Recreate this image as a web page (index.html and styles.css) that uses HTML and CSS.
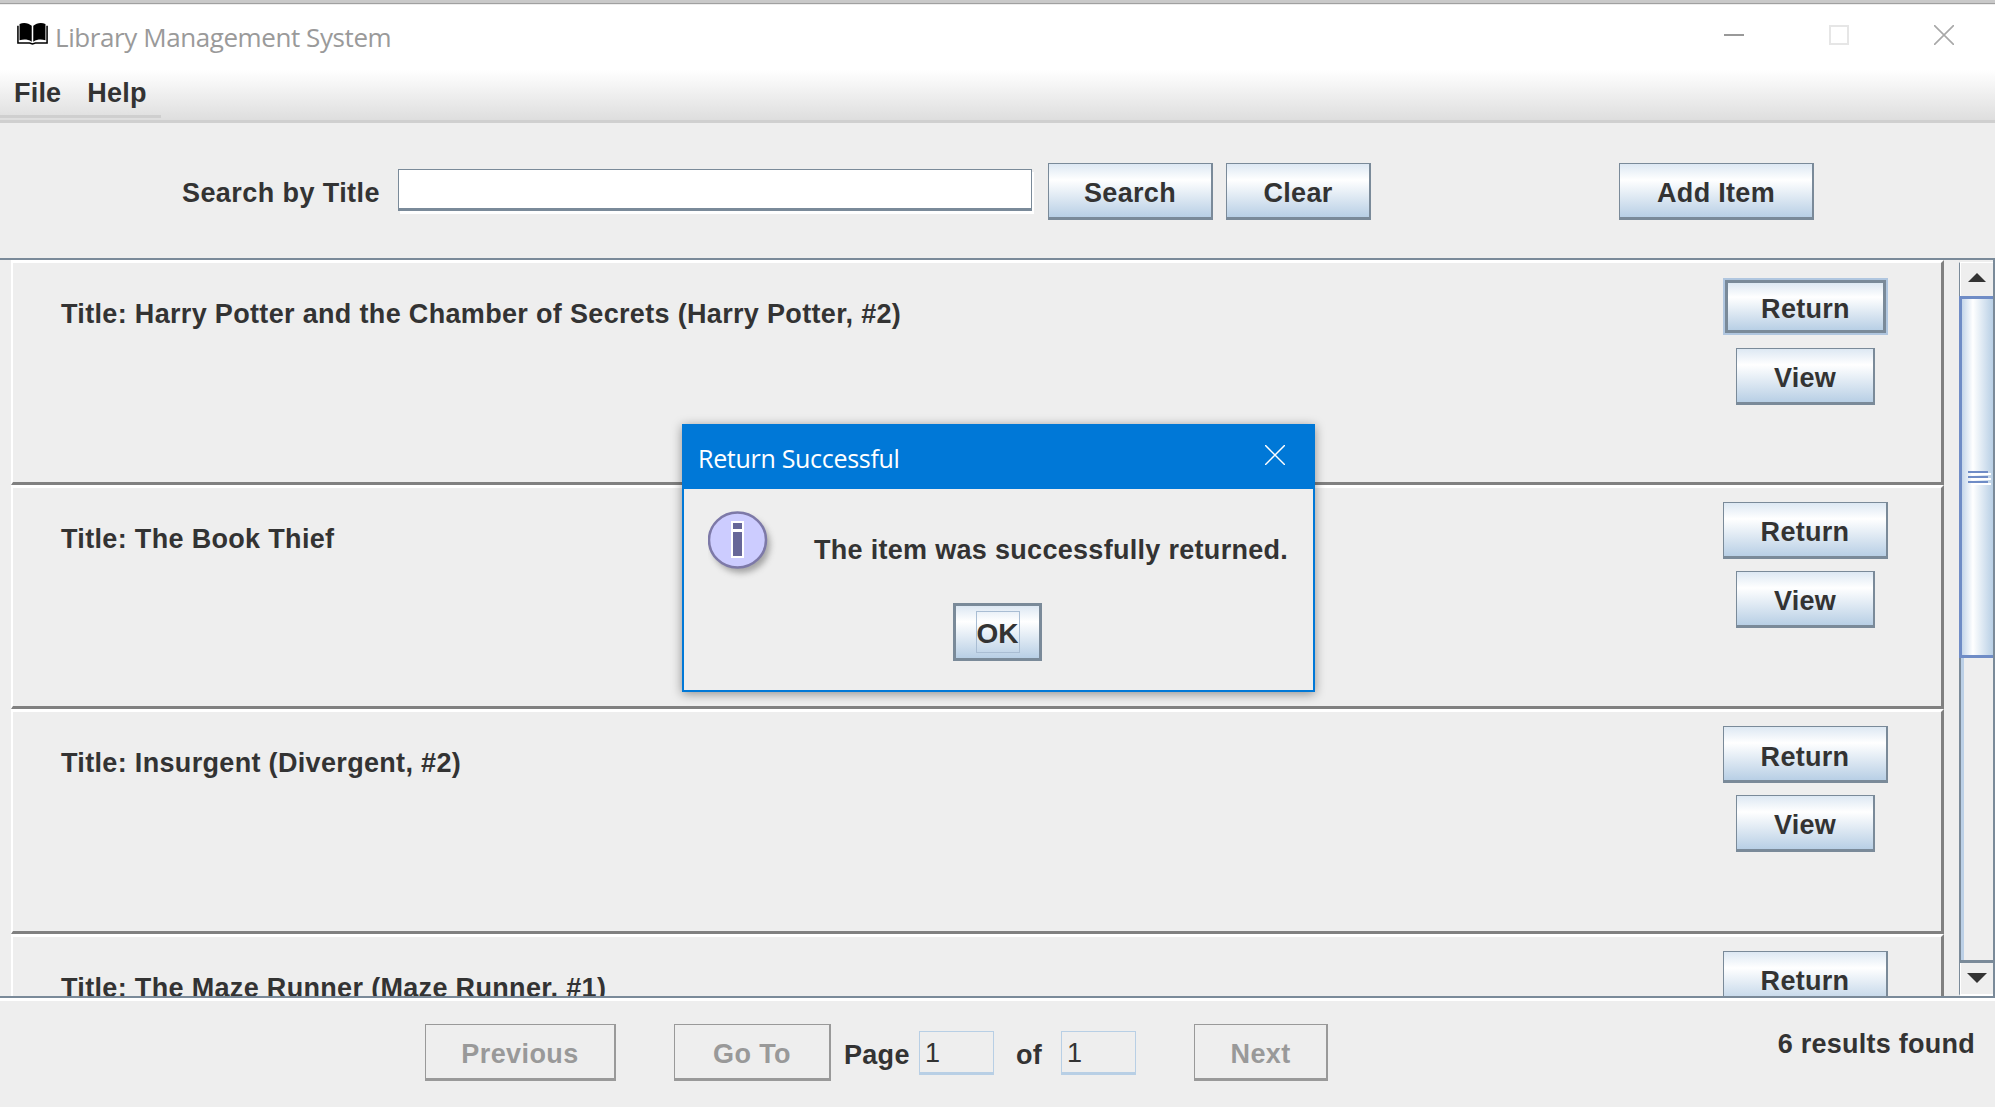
FILE: index.html
```html
<!DOCTYPE html>
<html lang="en">
<head>
  <meta charset="UTF-8">
  <title>Library Management System</title>
  <link rel="stylesheet" href="styles.css">
</head>
<body>
  <div class="window">
    <div class="titlebar">
      <svg class="book" viewBox="0 0 32 24" width="31" height="23">
        <path fill="#000" d="M2.5 2 C7 0 12 1 15.2 4 V20.5 C11 18 7 18 2.5 19 Z M16.8 4 C20 1 25 0 29.5 2 V19 C25 18 21 18 16.8 20.5 Z"/>
        <path fill="none" stroke="#000" stroke-width="1.6" d="M0.8 4 V22 H13 L16 23 L19 22 H31.2 V4"/>
      </svg>
      <span class="app-title">Library Management System</span>
      <div class="win-buttons">
        <svg viewBox="0 0 20 20" width="20" height="20"><path stroke="#999" stroke-width="2" d="M0 10 H20"/></svg>
        <svg viewBox="0 0 20 20" width="20" height="20"><rect x="1" y="1" width="18" height="18" fill="none" stroke="#e6e6e6" stroke-width="2"/></svg>
        <svg viewBox="0 0 20 20" width="20" height="20"><path stroke="#a8a8a8" stroke-width="1.6" fill="none" d="M0 0 L20 20 M20 0 L0 20"/></svg>
      </div>
    </div>

    <div class="menubar">
      <div class="menus">
        <span class="menu">File</span>
        <span class="menu">Help</span>
      </div>
    </div>

    <div class="searchbar">
      <label class="search-label">Search by Title</label>
      <div class="search-input"></div>
      <button class="btn btn-search">Search</button>
      <button class="btn btn-clear">Clear</button>
      <button class="btn btn-add">Add Item</button>
    </div>

    <div class="results">
      <div class="list">
        <div class="item">
          <div class="item-title">Title: Harry Potter and the Chamber of Secrets (Harry Potter, #2)</div>
          <div class="actions">
            <button class="btn btn-return focused">Return</button>
            <button class="btn btn-view">View</button>
          </div>
        </div>
        <div class="item">
          <div class="item-title">Title: The Book Thief</div>
          <div class="actions">
            <button class="btn btn-return">Return</button>
            <button class="btn btn-view">View</button>
          </div>
        </div>
        <div class="item">
          <div class="item-title">Title: Insurgent (Divergent, #2)</div>
          <div class="actions">
            <button class="btn btn-return">Return</button>
            <button class="btn btn-view">View</button>
          </div>
        </div>
        <div class="item">
          <div class="item-title">Title: The Maze Runner (Maze Runner, #1)</div>
          <div class="actions">
            <button class="btn btn-return">Return</button>
          </div>
        </div>
      </div>
      <div class="scrollbar">
        <div class="arrow-btn"><span class="tri-up"></span></div>
        <div class="track">
          <div class="thumb">
            <span class="grip"></span>
            <span class="grip"></span>
            <span class="grip"></span>
          </div>
        </div>
        <div class="arrow-btn arrow-down"><span class="tri-down"></span></div>
      </div>
    </div>

    <div class="pager">
      <button class="btn-off btn-prev">Previous</button>
      <button class="btn-off btn-goto">Go To</button>
      <span class="pager-text page-label">Page</span>
      <div class="page-field">1</div>
      <span class="pager-text of-label">of</span>
      <div class="page-field">1</div>
      <button class="btn-off btn-next">Next</button>
      <span class="pager-text found">6 results found</span>
    </div>
  </div>

  <div class="dialog">
    <div class="dialog-title">
      <span>Return Successful</span>
      <svg viewBox="0 0 20 20" width="20" height="20"><path stroke="#fff" stroke-width="1.5" fill="none" d="M0 0 L20 20 M20 0 L0 20"/></svg>
    </div>
    <div class="dialog-body">
      <svg class="info" viewBox="0 0 70 72" width="70" height="72">
        <defs>
          <filter id="soft" x="-30%" y="-30%" width="160%" height="160%"><feGaussianBlur stdDeviation="3"/></filter>
        </defs>
        <ellipse cx="33" cy="34" rx="29" ry="28" fill="#666" opacity="0.55" filter="url(#soft)"/>
        <ellipse cx="29.5" cy="29" rx="28.5" ry="27.5" fill="#ccccff" stroke="#7d79a8" stroke-width="2.5"/>
        <rect x="23" y="10" width="13" height="37" fill="#fff"/>
        <rect x="25" y="12" width="9" height="6" fill="#666699"/>
        <rect x="25" y="21" width="9" height="24" fill="#666699"/>
      </svg>
      <div class="dialog-msg">The item was successfully returned.</div>
      <button class="btn btn-ok"><span class="ok-focus">OK</span></button>
    </div>
  </div>
</body>
</html>
```

FILE: styles.css
```css
* {
  box-sizing: border-box;
}
html, body {
  margin: 0;
  height: 100%;
  overflow: hidden;
}
body {
  font-family: "Liberation Sans", Arial, sans-serif;
  background-color: #eeeeee;
  color: #333333;
  position: relative;
}
.window {
  height: 1107px;
  display: flex;
  flex-direction: column;
  border-top: 3px solid #c9c9c9;
}

/* title bar */
.titlebar {
  height: 67px;
  flex: none;
  background-color: #fff;
  border-top: 1px solid #a0a0a0;
  box-shadow: inset 0 1px 0 #eeeeee;
  display: flex;
  align-items: center;
  padding-left: 17px;
}
.book {
  margin-top: -8px;
}
.app-title {
  font-family: "Open Sans", sans-serif;
  font-size: 26px;
  color: #9a9a9a;
  margin-left: 7px;
  letter-spacing: -0.42px;
}
.win-buttons {
  margin-left: auto;
  margin-top: -5px;
  display: flex;
  gap: 85px;
  padding-right: 41px;
}

/* menu */
.menubar {
  height: 53px;
  flex: none;
  background: linear-gradient(#ffffff, #dedede);
  border-bottom: 3px solid #cfcfcf;
}
.menus {
  width: 161px;
  height: 48px;
  display: flex;
  gap: 26px;
  padding: 6px 0 0 14px;
  border-bottom: 3px solid #cfcfcf;
}
.menu {
  font-size: 27px;
  font-weight: bold;
  line-height: 34px;
  letter-spacing: 0.2px;
}

/* search row */
.searchbar {
  height: 137px;
  flex: none;
  display: flex;
  align-items: flex-start;
  padding-top: 40px;
  border-bottom: 2px solid #7a8a99;
}
.search-label {
  margin-left: 182px;
  width: 216px;
  font-size: 27px;
  font-weight: bold;
  line-height: 60px;
  letter-spacing: 0.42px;
}
.search-input {
  width: 634px;
  height: 42px;
  margin-top: 6px;
  background-color: #fff;
  border: 1px solid #7a8a99;
  border-bottom-width: 3px;
  box-shadow: 2px 3px 0 #fff;
}
.btn {
  font-family: "Liberation Sans", Arial, sans-serif;
  font-size: 27px;
  font-weight: bold;
  color: #333333;
  letter-spacing: 0.3px;
  padding: 5px 0 0;
  background: linear-gradient(#dde8f3 0, #ffffff 30%, #b8cfe5 100%);
  border: 1px solid #7a8a99;
  border-right-width: 2px;
  border-bottom-width: 3px;
}
.btn-search {
  width: 165px;
  height: 57px;
  margin-left: 16px;
}
.btn-clear {
  width: 145px;
  height: 57px;
  margin-left: 13px;
}
.btn-add {
  width: 195px;
  height: 57px;
  margin-left: 248px;
}

/* result list */
.results {
  flex: 1;
  min-height: 0;
  display: flex;
  overflow: hidden;
}
.list {
  width: 1944px;
  flex: none;
  padding-left: 11px;
}
.item {
  height: 224.5px;
  display: flex;
  justify-content: space-between;
  align-items: flex-start;
  border-top: 3px solid #fff;
  border-bottom: 3px solid #808080;
  border-right: 3px solid #808080;
  border-left: 2px solid #fff;
  padding-right: 53px;
}
.item-title {
  margin-left: 48px;
  margin-top: 34px;
  font-size: 27px;
  font-weight: bold;
  line-height: 34px;
  letter-spacing: 0.33px;
}
.actions {
  width: 165px;
  margin-top: 14px;
  display: flex;
  flex-direction: column;
  align-items: center;
  gap: 12px;
}
.btn-return {
  width: 165px;
  height: 57px;
  padding-top: 7px;
  flex: none;
}
.btn-return.focused {
  width: 161px;
  height: 53px;
  margin: 3px 0 3px;
  padding-top: 5px;
  border-width: 3px;
  box-shadow: 0 0 0 2px #b0c6df;
}
.btn-view {
  width: 139px;
  height: 57px;
  padding-top: 6px;
  flex: none;
}

/* scrollbar */
.scrollbar {
  flex: 1;
  margin-left: 15px;
  padding-top: 2px;
  display: flex;
  flex-direction: column;
  border-right: 2px solid #7a8a99;
}
.arrow-btn {
  height: 34px;
  flex: none;
  background-color: #eeeeee;
  border-left: 1px solid #7a8a99;
  border-top: 1px solid #fff;
  box-shadow: inset 1px 0 0 #fff;
  display: flex;
  justify-content: center;
  padding-top: 10px;
}
.arrow-down {
  height: 36px;
  border-top: 3px solid #7a8a99;
  border-bottom: 2px solid #fff;
}
.tri-up {
  width: 0;
  height: 0;
  border-left: 9px solid transparent;
  border-right: 9px solid transparent;
  border-bottom: 9px solid #333;
}
.tri-down {
  width: 0;
  height: 0;
  border-left: 10px solid transparent;
  border-right: 10px solid transparent;
  border-top: 10px solid #333;
}
.track {
  flex: 1;
  border-left: 2px solid #7a8a99;
  box-shadow: inset 3px 0 0 #bcd0e6;
}
.thumb {
  height: 362px;
  margin-left: -2px;
  border: 3px solid #6f8cc6;
  border-right: 0;
  background: linear-gradient(90deg, #c5d6ea 0, #ffffff 35%, #b8cfe5 100%);
  display: flex;
  flex-direction: column;
  align-items: center;
  justify-content: center;
  gap: 3px;
}
.grip {
  width: 20px;
  height: 2px;
  background-color: #6f8cc6;
  box-shadow: 3px 2px 0 #fff;
}

/* bottom pager */
.pager {
  height: 111px;
  flex: none;
  display: flex;
  align-items: flex-start;
  border-top: 2px solid #7a8a99;
  box-shadow: inset 0 3px 0 #fff;
  padding-top: 26px;
}
.btn-off {
  font-family: "Liberation Sans", Arial, sans-serif;
  font-size: 27px;
  font-weight: bold;
  color: #999999;
  letter-spacing: 0.4px;
  height: 57px;
  padding: 5px 0 0;
  background-color: #eeeeee;
  border: 1px solid #999999;
  border-right-width: 2px;
  border-bottom-width: 3px;
}
.btn-prev {
  width: 191px;
  margin-left: 425px;
}
.btn-goto {
  width: 157px;
  margin-left: 58px;
}
.pager-text {
  font-size: 27px;
  font-weight: bold;
  line-height: 62px;
  letter-spacing: 0.3px;
}
.page-label {
  margin-left: 13px;
  width: 75px;
}
.of-label {
  margin: 0 19px 0 22px;
}
.page-field {
  width: 75px;
  height: 44px;
  margin-top: 7px;
  padding-left: 5px;
  font-size: 27px;
  line-height: 42px;
  border: 1px solid #b8cfe5;
  border-bottom-width: 3px;
}
.btn-next {
  width: 134px;
  margin-left: 58px;
}
.found {
  margin-left: auto;
  margin-right: 20px;
  margin-top: -11px;
  letter-spacing: 0.25px;
}

/* message dialog, lies over the window */
.dialog {
  position: absolute;
  left: 682px;
  top: 424px;
  width: 633px;
  height: 268px;
  background-color: #eeeeee;
  border: 2px solid #0078d7;
  box-shadow: 0 2px 10px rgba(0, 0, 0, 0.4);
}
.dialog-title {
  height: 63px;
  background-color: #0078d7;
  color: #fff;
  font-family: "Open Sans", sans-serif;
  font-size: 25px;
  display: flex;
  align-items: center;
  justify-content: space-between;
  padding: 0 28px 0 14px;
  letter-spacing: -0.3px;
}
.dialog-title svg {
  margin-top: -5px;
}
.dialog-body {
  position: relative;
  height: 201px;
}
.info {
  position: absolute;
  left: 24px;
  top: 22px;
}
.dialog-msg {
  position: absolute;
  left: 130px;
  top: 44px;
  font-size: 27px;
  font-weight: bold;
  line-height: 34px;
  letter-spacing: 0.3px;
  white-space: nowrap;
}
.btn-ok {
  position: absolute;
  left: 269px;
  top: 114px;
  width: 89px;
  height: 58px;
  padding: 0;
  border-width: 3px;
  display: flex;
  align-items: center;
  justify-content: center;
  letter-spacing: 0;
  font-size: 28px;
}
.ok-focus {
  display: block;
  width: 44px;
  height: 42px;
  line-height: 44px;
  border: 1px solid #a9bdd3;
}
```
